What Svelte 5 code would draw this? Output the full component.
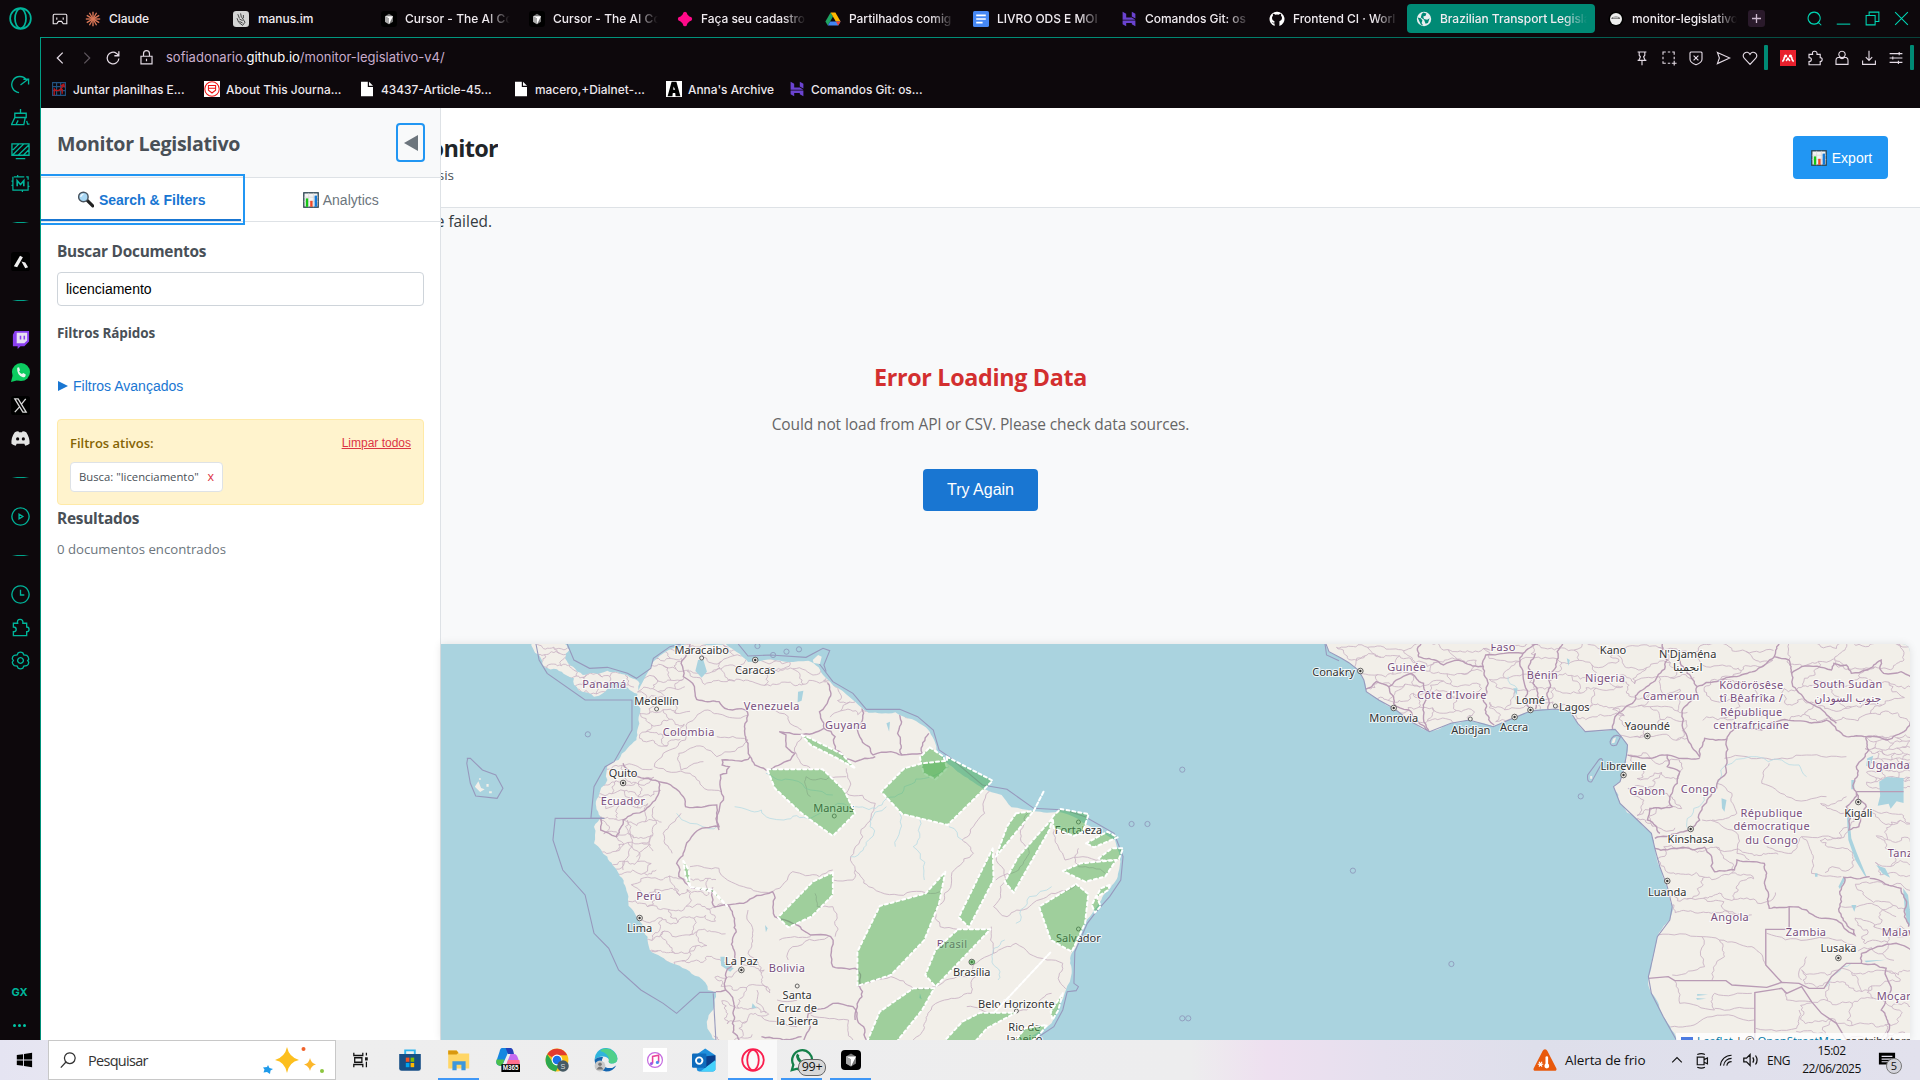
<script>
  const tabs = [
    ['claude', 'Claude'], ['manus', 'manus.im'], ['cursor', 'Cursor - The AI Co'], ['cursor', 'Cursor - The AI Co'],
    ['pink', 'Faça seu cadastro'], ['drive', 'Partilhados comig'], ['docs', 'LIVRO ODS E MOI'],
    ['hostinger', 'Comandos Git: os'], ['github', 'Frontend CI · Worl'],
    ['globe', 'Brazilian Transport Legisla'], ['render', 'monitor-legislativo']
  ];
  const bookmarks = [
    ['sheet', 'Juntar planilhas E...', 153], ['shieldred', 'About This Journa...', 155], ['file', '43437-Article-45...', 154],
    ['file', 'macero,+Dialnet-...', 153], ['anna', "Anna's Archive", 123], ['hostinger', 'Comandos Git: os...', 140]
  ];
  const tools = ['pin', 'snap', 'shield', 'send', 'heart'];
  const tools2 = ['mendeley', 'puzzle', 'user', 'download', 'sliders'];
  const rail = ['speed', 'broom', 'monitor', 'mod', '-', 'aria', '-', 'twitch', 'whatsapp', 'x', 'discord', '-', 'play', '-', 'clock', 'puzzle', 'gear'];
  const apps = ['taskview', 'store', 'explorer', 'm365', 'chrome', 'edge', 'itunes', 'outlook', 'operared', 'waoutline', 'cursorapp'];
  const running = ['explorer', 'operared', 'waoutline', 'cursorapp'];

  // Single-stroke glyphs on a 20x20 grid
  const strokes = {
    back: 'M13 4 7 10l6 6', fwd: 'M7 4l6 6-6 6', reload: 'M16.500 10.500a6.500 6.500 0 1 1-2.500-5.600l2 2M16.500 2.500v5h-5',
    lock: 'M3.500 8.500h13v9h-13zM6.500 8.500V5.500a3.500 3.500 0 0 1 7 0v3M10 11.500v3',
    pin: 'M4.500 2.500h11M4.500 13h11M6.500 2.500v4l1.500 2-2 4.500M13.500 2.500v4l-1.500 2 2 4.500M10 13v6',
    snap: 'M2.500 6V2.500H6M8.500 2.500h3M14 2.500h2.500V6M2.500 8.500v3M2.500 14v2.500H6M8.500 16.500h3M16.500 8.500v3M16.500 13.500v6M13.500 16.500h6',
    shield: 'M2.500 3.500l1-1h13l1 1v8q0 4-7.500 7Q2.500 15.500 2.500 11.500zM7 7l6 6M13 7l-6 6',
    send: 'M3 3l15.500 7L3 17l2.500-7z',
    heart: 'M10 18 3 10.500Q0 7 3 4q4-3 7 1.500Q13 1 17 4q3 3 0 6.500z',
    puzzle: 'M2.500 5.500h4.500q-1-4 2.500-4T12.500 5.500H16.500v4q2.500 0 2.500 2.500t-2.500 2.500V18.500H2.500v-4q3 0 3-2.500t-3-2.500z',
    user: 'M10 1.500a4 4 0 1 0 .01 0M6.500 9q-4 0-4 4v5h15v-5q0-4-4-4Q10 13 6.500 9',
    download: 'M10 1v12M6 9l4 4 4-4M2 13v5h16v-5',
    sliders: 'M2 4.500h16M2 10h16M2 15.500h16M14 2.500v4M6 8v4M13 13.500v4',
    speed: 'M16.500 5.500A8.500 8.500 0 1 0 8.500 18.500M10 10.500 18 4.500M18.500 10V4.500H13',
    broom: 'M10 1v4.500M4 5.500h12v4.500H4zM4 10 .500 17.500h13l1.500-7.500M5.500 17l2-4M16.500 13.500l1 3.500h2',
    monitor: 'M1 3h18v12H1zM5 18.500h10M2 9.500l6.500-6.500M2 14.500 13.500 3M7.500 15 18.500 4.500M13 15l5.500-5.500',
    play: 'M10 1a9 9 0 1 0 .01 0M8.500 7.500v5l4-2.500z', clock: 'M10 1a9 9 0 1 0 .01 0M10 5v5.500h4',
    gear: 'M7.500 2Q10 .500 12.500 2l1 2 3 .5q2.500 2 2 4.500L17.500 10l1 1.500q.5 2.500-2 4l-3 .5-1 2Q10 19.500 7.500 18l-1-2-3-.5q-2.500-2-2-4L2.500 10l-1-1.500Q1 6 3.500 4.500l3-.5zM10 7a3 3 0 1 0 .01 0',
    search: 'M9.500 1.500a8 8 0 1 0 .01 0M15 15l4 4', min: 'M1 17.500h18', restore: 'M1.500 6h12v12.500h-12zM5.500 6V1.500h13V14h-5', close: 'M1.500 1.500l17 17M18.500 1.500l-17 17',
    island: 'M3 4h14q1.500 0 1.500 1.500V16H14l-2-3H8l-2 3H1.500V5.500Q1.500 4 3 4zM6 8v3M14 8v3',
    find: 'M12 2a6 6 0 1 0 .01 0M7.500 12.500 2 18.500', caret: 'M4 13l6-6 6 6',
    cam: 'M5 6h8v9H5zM13 9l4-2v7l-4-2M5 3q5-2 9 0M5 18q5 2 9 0', wifi: 'M3 17A14 14 0 0 1 17 4M7 17A10 10 0 0 1 17 8M11 17a6 6 0 0 1 6-5',
    speaker: 'M2 8h3l4-4v12l-4-4H2zM12 7q2 3 0 6M15 5q3.500 5 0 10'
  };

  // Deterministic noise that roughens border lines
  let seed = 7;
  const rnd = () => (seed = (seed * 16807) % 2147483647) / 2147483647 - 0.5;
  function parse(s) {
    return s.trim().split(' ').map((p) => p.split(',').map(Number));
  }
  function rough(s, amp = 0.22, min = 16) {
    const pts = parse(s);
    const out = [pts[0]];
    const split = (a, b) => {
      const dx = b[0] - a[0], dy = b[1] - a[1];
      if (Math.hypot(dx, dy) < min) { out.push(b); return; }
      const r = rnd() * amp * 2;
      const m = [(a[0] + b[0]) / 2 - dy * r, (a[1] + b[1]) / 2 + dx * r];
      split(a, m); split(m, b);
    };
    for (let i = 1; i < pts.length; i++) split(pts[i - 1], pts[i]);
    return 'M' + out.map((p) => p[0].toFixed(1) + ' ' + p[1].toFixed(1)).join('L');
  }
  // District borders: a jittered brick lattice
  function mesh(x0, y0, x1, y1, w, h) {
    const nodes = [];
    for (let y = y0, j = 0; y <= y1; y += h, j++) {
      const row = [];
      for (let x = x0 + (j % 2 ? w / 2 : 0); x <= x1; x += w) row.push([x + rnd() * w * 0.7, y + rnd() * h * 0.7]);
      nodes.push(row);
    }
    let d = '';
    const line = (a, b) => (d += rough(`${a[0]},${a[1]} ${b[0]},${b[1]}`, 0.3, 9));
    nodes.forEach((row, j) => row.forEach((p, i) => {
      if (row[i + 1]) line(p, row[i + 1]);
      if (nodes[j + 1] && nodes[j + 1][i] && (i + j) % 2 === 0) line(p, nodes[j + 1][i]);
    }));
    return d;
  }

  const americaCoast = '440,180 445,230 442,270 440,300 420,325 400,360 375,375 375,420 355,470 350,500 360,530 345,560 345,610 375,650 400,700 420,760 440,830 465,890 470,930 520,970 580,1010 600,1050 618,1060 622,1210';
  const atlantic = '1300,1210 1330,1185 1370,1150 1385,1100 1402,1050 1415,1000 1415,940 1430,900 1445,850 1465,810 1490,760 1518,710 1523,650 1512,600 1490,583 1440,548 1395,518 1360,518 1330,514 1280,502 1258,465 1215,445 1170,405 1130,362 1112,330 1103,290 1088,262 1058,238 1020,217 960,218 943,202 918,172 882,138 863,112 848,82 825,62 780,66 740,58 690,66 672,42 640,12 560,10 512,30 477,66 462,105 445,150 440,180';
  const america = rough(americaCoast, 0.13, 14) + rough(atlantic, 0.06, 14).replace('M', 'L') + 'Z';
  const panama = rough('205,5 222,45 235,82 262,88 282,105 300,115 310,150 345,170 365,160 380,130 405,125 425,150 448,165 447,130 425,112 400,98 375,92 345,100 320,105 298,80 280,55 290,30 275,5', 0.15, 12) + 'Z';
  const africaCoast = '372,5 380,35 405,55 420,68 440,92 450,120 455,155 480,180 510,205 545,245 582,275 625,250 662,240 710,260 750,235 785,213 835,207 865,215 880,250 895,275 955,268 965,285 980,315 978,345 972,390 965,425 952,440 965,490 1000,540 1028,580 1035,625 1045,680 1060,740 1070,800 1065,840 1040,890 1030,960 1022,1010 1028,1060 1052,1130 1082,1210';
  const africa = rough(africaCoast, 0.07, 12) + 'L1560 1210L1560 5Z';
  const toPath = (s) => 'M' + s.replaceAll(' ', 'L');

  const americaBorders = [
    '560,12 540,70 545,110 570,140 575,178 625,185 645,208 685,210 690,225 682,260 690,310 695,350',
    '695,350 690,358 632,360 632,375 648,380 642,400 628,405 635,480 625,570', '695,350 705,375 730,390 785,360 795,340 775,320 775,285 760,275 805,283 860,265',
    '868,130 870,180 850,215 860,250 860,265 885,290 885,330 910,355 930,365 975,350', '945,205 935,260 945,300 970,345 1010,335 1035,345 1080,340 1095,280', '1030,225 1025,280 1030,330 1035,345',
    '410,370 430,400 490,425 545,470 550,500 620,495 625,560 570,580 550,620 530,670 535,710 565,745 610,745 615,800 645,795',
    '490,425 490,460 460,510 410,540 395,590 360,570 360,530', '645,795 660,850 655,900 660,950 640,1000 640,1050 618,1055',
    '645,795 680,790 745,755 750,830 790,850 830,885 875,890 880,980 930,985 940,1040 935,1100 930,1140', '640,1050 660,1100 655,1150 670,1200',
    '825,1120 880,1090 925,1100 935,1140 955,1200', '825,1120 815,1200', '720,1190 755,1195 810,1190'
  ].map((s) => rough(s, 0.13, 12));
  const americaStates = [
    '975,490 920,650 930,690 960,740 1120,755', '1235,450 1220,520 1170,600 1195,640 1160,680 1130,760 1120,860 1160,868', '880,720 925,720 930,690', '560,680 625,685 680,740 745,755 790,695 850,710 880,690',
    '910,385 910,460 975,490', '910,410 820,410 830,470', '1235,860 1240,940 1290,910 1360,960 1395,970 1390,1030 1405,1050', '1245,640 1240,800 1270,830 1320,800 1370,760 1425,735', '935,1040 1010,1010 1060,1045 1110,1040 1180,1010 1240,940',
    '1320,510 1300,580 1320,640 1280,700 1245,720', '1375,565 1385,620 1400,660', '1400,660 1440,650 1480,660', '1430,625 1430,680 1490,700', '690,225 600,210 560,245 550,300', '535,340 590,320 620,350 690,300 620,290', '535,340 540,390 590,365', '550,300 500,340 480,380 560,400 600,450 630,455',
    '740,210 780,230 810,270', '810,283 800,350 830,385', '1100,1110 1130,1080 1190,1060 1200,1010', '1100,1110 1060,1200', '1180,1100 1240,1120', '1290,1118 1370,1060', '760,900 830,890', '780,960 790,920 870,890', '755,1080 800,1080', '690,810 700,880 690,940 720,1000', '710,1050 730,1120', '840,760 845,800 880,800 885,890', '420,540 430,620 410,690', '480,500 470,600 440,650', '540,520 500,580 520,640', '830,1125 915,1140 925,1200', '720,1130 800,1160'
  ].map((s) => rough(s, 0.16, 12));
  const americaFine = [mesh(440, 20, 560, 330, 28, 32), mesh(560, 20, 860, 170, 40, 38), mesh(350, 380, 500, 720, 34, 40), mesh(420, 720, 650, 1010, 42, 42), mesh(620, 1000, 740, 1200, 46, 46), mesh(200, 20, 440, 180, 24, 28), mesh(870, 130, 1090, 260, 38, 44)];

  const africaBorders = [
    '450,150 475,125 500,140 510,190 540,210 582,275', '500,140 515,120 545,100 570,130 575,160 570,200 580,270', '565,12 560,50 600,65 610,75 640,60 680,80 690,80 700,130 690,180 695,220 712,255', '690,80 695,45 770,40 770,100 775,170 785,210', '795,40 790,130 800,160 795,208', '770,40 800,12', '850,12 838,60 820,110 818,160 820,207',
    '950,268 955,230 990,190 1010,150 1040,110 1060,60 1050,12', '1085,60 1100,100 1120,140 1110,180 1090,220 1100,290 1125,350 1130,320 1135,295 1180,297', '980,345 1060,345 1125,355', '1060,345 1060,380 1085,395 1080,430 1065,470 1070,500 1025,505 1020,540 1045,580',
    '1180,297 1180,360 1160,430 1140,480 1125,540 1105,570 1080,580 1035,595', '1180,297 1200,260 1250,270 1290,240 1340,245 1380,240 1400,270 1420,290 1460,290', '1120,140 1200,110 1240,90 1275,50 1305,60 1310,100 1320,150 1360,200 1400,250',
    '1310,100 1330,80 1390,90 1395,70 1420,75 1430,100 1460,90 1490,60 1495,100 1530,95 1550,110', '1275,50 1285,12', '1460,290 1500,300 1540,270 1550,240', '1460,290 1465,330 1440,380 1435,430 1440,455', '1440,455 1460,500 1445,560 1425,570 1420,500 1440,455',
    '1467,710 1415,712 1410,770 1410,830 1435,870 1437,885 1400,840 1370,835 1340,810 1305,800 1265,805 1260,750 1255,670 1225,665 1200,660 1195,690 1155,695 1150,660 1135,622 1035,625', '1467,715 1530,745 1540,800 1545,860', '1450,940 1520,910 1550,930', '1450,940 1450,970 1500,985 1510,1050 1490,1110 1500,1200'
  ].map((s) => rough(s, 0.13, 10));
  const africaStraight = ['1305,800 1305,868 1258,868 1258,975 1290,1027', '1022,1015 1062,1010 1075,1022 1178,1022 1190,1035 1260,1042 1290,1027 1325,1030 1345,1045 1375,1045 1390,1010 1420,970 1450,970', '1236,1200 1236,1058 1290,1045 1300,1060 1330,1040 1350,1085 1370,1120 1400,1150 1420,1200', '1440,455 1535,455'].map(toPath);
  const africaFine = [mesh(390, 20, 700, 250, 38, 38), mesh(700, 20, 960, 250, 40, 44), mesh(960, 30, 1130, 330, 38, 44), mesh(1462, 290, 1560, 450, 15, 17), mesh(1470, 510, 1560, 740, 34, 40), mesh(1330, 990, 1560, 1200, 44, 50)];
  const africaStates = [mesh(980, 360, 1100, 600, 44, 50), mesh(1040, 640, 1290, 820, 56, 60), mesh(1290, 20, 1560, 260, 54, 54), mesh(1130, 20, 1290, 250, 50, 54), mesh(1380, 480, 1450, 720, 44, 54), mesh(1440, 750, 1560, 960, 44, 50),
    ...['1175,355 1220,350 1260,355 1340,345 1420,350', '1160,430 1190,460 1200,520 1150,540', '1265,370 1250,430 1300,470 1380,470', '1330,590 1415,592 1425,570', '1330,590 1350,640 1350,700 1410,710', '1260,620 1310,640 1330,590', '1130,540 1190,570 1200,640 1225,660', '1040,885 1130,890 1135,980 1070,1005', '1130,890 1165,900 1175,950 1150,1020', '1165,900 1230,920 1258,975', '1075,1022 1085,1090 1155,1110 1155,1060 1230,1060', '1060,1165 1120,1150 1150,1130 1235,1140', '1155,1105 1235,1105', '1238,1165 1320,1165 1325,1110', '1295,1055 1300,1080 1350,1085', '1260,880 1340,900 1410,900 1440,920', '1340,950 1330,1020', '1410,800 1470,790 1520,830'].map((s) => rough(s, 0.15, 12))];

  const zones = [
    '810,285 825,292 900,342 930,385 890,355 830,315', '733,388 857,388 905,450 930,520 880,588 810,520 750,445', '1097,322 1128,350 1136,385 1110,418 1083,400 1075,352', '1135,350 1238,422 1137,555 1035,522 988,455 1040,385 1080,370 1136,362',
    '1290,520 1330,513 1353,452 1330,513 1245,650 1270,560', '1372,535 1365,570 1285,758 1265,725 1295,650', '1390,507 1453,522 1440,575 1420,588 1375,565 1372,530', '1447,610 1495,575 1518,592 1465,622', '1475,655 1505,625 1530,625 1520,660 1485,662', '1395,693 1435,670 1515,660 1490,710 1445,725',
    '1500,735 1497,750 1470,772 1480,745', '1470,768 1480,798 1467,818 1460,795', '1425,732 1452,762 1445,850 1415,935 1368,900 1342,800', '1238,625 1240,720 1185,862 1162,832 1210,700', '1132,695 1118,790 1085,900 1010,1005 935,1038 935,935 985,798 1088,760', '1160,868 1233,868 1110,1040 1087,1005 1110,930', '880,697 880,765 832,830 780,862 757,832 835,725',
    '545,662 557,690 560,742 550,710', '562,742 610,748 643,798 610,755', '1060,1045 1107,1045 1080,1110 1020,1210 955,1210 985,1115', '1125,1210 1170,1145 1210,1118 1290,1118 1225,1165 1195,1210', '1395,1060 1385,1110 1372,1140 1368,1115', '1285,1210 1310,1165 1360,1155 1345,1180 1320,1210', '1367,938 1240,1120'
  ];
  const seaLines = [
    '215,12 222,60 240,100 325,180 430,180 430,270 390,365 370,380 345,440 338,535', '368,535 258,535 253,600 275,690 325,765 345,880 378,925 400,990 450,1050 500,1090 530,1120 582,1057 618,1057', '285,12 300,60 335,85 375,82 420,100 440,115 472,85 478,55 515,20 540,12', '60,355 68,355 95,390 125,405 141,445 128,475 80,468 68,430 60,370 62,355',
    '668,12 690,48 740,45 820,52 858,25 873,32 860,75 865,95', '850,72 880,125 925,160 955,208 1030,208 1070,230 1105,270 1118,330 1140,350 1215,435 1270,448 1330,505 1400,510 1445,530 1510,580 1530,650 1525,720 1500,770 1470,815 1450,850 1422,935 1420,1030 1430,1040 1425,1052 1405,1055 1395,1110 1375,1160 1330,1200', '612,1060 618,1200', '338,535 368,535'
  ].map(toPath);
  const americaIslets = [[330, 283], [745, 45], [775, 35], [803, 28], [710, 18], [1548, 552]];
  const africaIslets = [[84, 389], [14, 552], [427, 692], [625, 972], [84, 1135], [96, 1135], [885, 469]];

  // [x, y, text, kind, marker dx, marker dy, left-aligned x]; kind: c = country, t = town, k = capital
  const americaLabels = [
    [585, 31, 'Maracaibo', 't', 0, 23], [705, 91, 'Caracas', 'k', 0, -31], [367, 133, 'Panamá', 'c'], [484, 183, 'Medellín', 't', 0, 24], [742, 198, 'Venezuela', 'c'], [908, 255, 'Guyana', 'c'], [556, 277, 'Colombia', 'c'],
    [409, 399, 'Quito', 'k', 0, 30], [409, 482, 'Ecuador', 'c'], [881, 504, 'Manaus', 't', 1, 24], [1429, 571, 'Fortaleza', 't', 0, -25], [467, 769, 'Perú', 'c'], [446, 865, 'Lima', 'k', 0, -31], [1146, 913, 'Brasil', 'c'], [1429, 893, 'Salvador', 't', 0, -26],
    [674, 962, 'La Paz', 'k', 0, 28], [776, 984, 'Bolivia', 'c'], [1190, 996, 'Brasília', 'k', 0, -30], [799, 1064, 'Santa', 't', 0, -26], [799, 1103, 'Cruz de', 't'], [799, 1142, 'la Sierra', 't'], [1290, 1091, 'Belo Horizonte', 't', 0, 22], [1308, 1161, 'Rio de', 't'], [1308, 1197, 'Janeiro', 't']
  ];
  const africaLabels = [
    [388, 95, 'Conakry', 'k', 54, -2], [535, 81, 'Guinée', 'c'], [729, 20, 'Faso', 'c'], [808, 106, 'Bénin', 'c'], [950, 31, 'Kano', 't'], [1100, 42, "N'Djaména", 't'], [1100, 82, 'انجمينا', 't'], [934, 114, 'Nigeria', 'c'], [626, 166, "Côte d'Ivoire", 'c'], [784, 181, 'Lomé', 'k', 0, 29],
    [872, 201, 'Lagos', 't', -38, -3], [1067, 169, 'Cameroun', 'c'], [1228, 135, 'Ködörösêse', 'c'], [1228, 175, 'tî Bêafrîka /', 'c'], [1228, 215, 'République', 'c'], [1228, 255, 'centrafricaine', 'c'], [1422, 132, 'South Sudan', 'c'], [1422, 175, 'جنوب السودان', 'c'],
    [509, 234, 'Monrovia', 'k', 0, -30], [664, 270, 'Abidjan', 't', -1, -33], [751, 260, 'Accra', 'k', 1, -29], [1019, 259, 'Yaoundé', 'k', 0, 29], [971, 377, 'Libreville', 'k', 0, 28], [1019, 452, 'Gabon', 'c'], [1122, 446, 'Congo', 'c'], [1504, 375, 'Uganda', 'c'],
    [1269, 519, 'République', 'c'], [1269, 559, 'démocratique', 'c'], [1269, 599, 'du Congo', 'c'], [1443, 519, 'Kigali', 'k', 0, -33], [1106, 597, 'Kinshasa', 'k', 0, -30], [1548, 638, 'Tanz', 'c', 0, 0, 1502], [1059, 755, 'Luanda', 'k', 0, -32], [1185, 832, 'Angola', 'c'], [1338, 875, 'Zambia', 'c'], [1530, 876, 'Malaw', 'c', 0, 0, 1490], [1403, 924, 'Lusaka', 'k', 0, 30], [1530, 1069, 'Moçar', 'c', 0, 0, 1480]
  ];
  const tiles = [
    { x: 440.5, sx: 2.24, labels: americaLabels, islets: americaIslets },
    { x: 1140.5, sx: 2.0103, labels: africaLabels, islets: africaIslets }
  ];
</script>

{#snippet icon(name, size = 18)}
  <svg class="icon i-{name}" width={size} height={size} viewBox="0 0 20 20" fill="none">
    {#if strokes[name]}<path d={strokes[name]} stroke="currentColor" stroke-width="1.4" />
    {:else if name === 'claude'}<g stroke="#d97757" stroke-width="1.7">{#each [0, 30, 60, 90, 120, 150] as a}<path d="M10 1v18" transform="rotate({a} 10 10)" />{/each}</g>
    {:else if name === 'manus'}<rect width="20" height="20" rx="4" fill="#d5d5d5" /><path d="M6 4l2 5M9.500 3l1 5M13 5v4M5 9l2 5 5 4 3-4-4-6M8 10l4 2M8 13l4 2" stroke="#333" stroke-width="1.100" />
    {:else if name === 'cursor' || name === 'cursorapp'}<rect width="20" height="20" rx="4" fill="#000" /><path d="M10 3.500l5 3v7l-5 3-5-3v-7z" fill="#777" /><path d="M5 6.500h10l-5 10v-7z" fill="#fff" /><path d="M5 6.500l5 3v7l-5-3z" fill="#aaa" />
    {:else if name === 'pink'}<path d="M10 1q2.500 0 3 3.500l2.500 2.500Q19 7.500 19 10t-3.500 3L13 15.500Q12.500 19 10 19t-3-3.500L4.500 13Q1 12.500 1 10t3.500-3L7 4.500Q7.500 1 10 1z" fill="#ff0a8a" />
    {:else if name === 'drive'}<path d="M7 2 0.500 13l3 5L10 7z" fill="#1ea362" /><path d="M7 2h6l6.500 11h-6z" fill="#ffba00" /><path d="M3.500 18h13l3-5h-13z" fill="#4285f4" /><path d="M13.500 13h6l-3 5z" fill="#ea4335" />
    {:else if name === 'docs'}<rect width="20" height="20" rx="2" fill="#4688f4" /><path d="M4 5.500h12M4 10h12M4 14.500h8" stroke="#fff" stroke-width="2" />
    {:else if name === 'hostinger'}<path d="M2 1l4.500 2.500v4.500h7L18 11H2zM13.500 1 18 3.500v6l-4.500-2.500zM2 12h16v7l-4.500-2.500V15h-7v4L2 16.500z" fill="#6a43d0" />
    {:else if name === 'github'}<path d="M10 1a9 9 0 0 0-3 17.600v-3q-3 .4-3.500-2.100 2 2 3.500.5 0-1-.3-1.300-3-.7-3-4Q3.700 7 5 6q-.5-1.500.2-2.500Q6.500 3.500 8 4.700q2-.5 4 0 1.500-1.200 2.800-1.200.7 1 .2 2.500 1.300 1 1.300 2.700 0 3.300-3.300 4v5.900A9 9 0 0 0 10 1z" fill="#fff" />
    {:else if name === 'globe'}<circle cx="10" cy="10" r="9" fill="#e9eef0" /><path d="M2 8l4 1 2 3-1 3 2 3-3-1zM9 2l4 1-1 3-3 1 1 3 4 1 3-2-2 6-3 1-2-5-4-3 1-4z" fill="#008a75" />
    {:else if name === 'render'}<circle cx="10" cy="10" r="9.500" fill="#000" /><circle cx="10" cy="10" r="7.500" fill="#eee" /><path d="M3 10h12q0-3-5-3-5 0-6 3z" fill="#666" /><path d="M6 8.500h7" stroke="#ccc" stroke-width="1.500" />
    {:else if name === 'sheet'}<path d="M2 2h16v16H2zM2 7h16M2 12h16M7 2v16M12 2v16" stroke="#235382" stroke-width="1.400" /><path d="M4 18V9q0 3 5 3 5-2 6-7M12 6l4-2 1 4M11 11h3v5" stroke="#b5181c" stroke-width="1.700" />
    {:else if name === 'shieldred'}<rect width="20" height="20" fill="#fff" /><circle cx="10" cy="10" r="9" stroke="#e11" stroke-width="1.300" /><path d="M5.500 5.500h9v6L10 15l-4.500-3.500zM6 9h8" stroke="#e11" stroke-width="1.300" />
    {:else if name === 'file'}<path d="M2.500 1h8.500v6.500h6.500V19h-15zM12.500 1l5 5h-5z" fill="#fff" />
    {:else if name === 'anna'}<rect width="20" height="20" fill="#fff" /><path d="M7 1h6l5 18h-6l-.5-4h-3L8 19H2zM9.500 7 9 11h2.500z" fill="#000" fill-rule="evenodd" />
    {:else if name === 'mendeley'}<rect width="20" height="20" fill="#e9202d" /><path d="M3 14.500q2.500-2 2.500-6M14.500 8.500q0 4 2.500 6M7.500 13.500q2-1.500 2.500-4 .5 2.500 2.500 4" stroke="#fff" stroke-width="2" /><circle cx="7" cy="7.500" r="2" fill="#fff" /><circle cx="13" cy="7.500" r="2" fill="#fff" />
    {:else if name === 'mod'}<path d="M3 3h11M16 3h2v3M18 8v9H2V3M.5 7.500h2M.5 12h2M17.500 13h2M7 1v2M12 17v2" stroke="currentColor" stroke-width="1.300" /><path d="M6.500 13V7L10 11l3.500-4v6" stroke="currentColor" stroke-width="1.700" />
    {:else if name === 'aria'}<rect width="20" height="20" rx="3" fill="#000" /><path d="M3 15 9.500 4l3 1.500L6.500 16zM11 10l4 1 3 5-3 1z" fill="#eee" />
    {:else if name === 'twitch'}<path d="M4 1h15v11l-5 5h-4l-3 3v-3H2V5z" fill="#8a3ff0" /><path d="M6 3h11v8l-3 3H6z" fill="#e6dff2" /><path d="M10 6v4M14 6v4" stroke="#8a3ff0" stroke-width="1.600" />
    {:else if name === 'whatsapp'}<circle cx="10.500" cy="9.500" r="9.500" fill="#0ccb60" /><path d="M0 20l2-8 6 6z" fill="#0ccb60" /><path d="M6.500 5l2-.5 1 3-1 1.500q1 2 3 2.500l1.500-1 2.500 1.500q0 3-3 3Q6 13 6.500 5z" fill="#e9f5ee" />
    {:else if name === 'x'}<rect width="20" height="20" rx="3" fill="#000" /><path d="M4 3h3.500L16 17h-3.500zM15.500 3 11 8.500M9 11.500 4 17" stroke="#d8d8d8" stroke-width="1.400" />
    {:else if name === 'discord'}<path d="M4 3.500q2-1.200 4-1l.5 1h3l.5-1q2-.2 4 1 4 6 3.500 12-2 1.500-4.500 2l-1-2h-8l-1 2q-2.500-.5-4.500-2Q0 9 4 3.500z" fill="#e4e4e4" /><circle cx="7" cy="10.500" r="1.700" fill="#0d080c" /><circle cx="13" cy="10.500" r="1.700" fill="#0d080c" />
    {:else if name === 'opera' || name === 'operared'}<circle cx="10" cy="10" r="9" stroke="currentColor" stroke-width="1.500" /><ellipse cx="10" cy="10" rx="4.800" ry="8.500" stroke="currentColor" stroke-width="1.500" />
    {:else if name === 'win'}<path d="M2 4.500l7-1v6H2zM10 3.300 19 2v7.500h-9zM2 10.500h7v6l-7-1zM10 10.500h9V18l-9-1.300z" fill="#000" />
    {:else if name === 'taskview'}<path d="M2 2v3h10V2M2 18v-3h10v3M3 7.500h8v5H3zM16 2v3M16 12v6" stroke="#111" stroke-width="1.400" /><path d="M14.500 7h3v3.500h-3z" fill="#111" />
    {:else if name === 'store'}<path d="M6 5V2h8v3" stroke="#30b6f0" stroke-width="1.600" /><path d="M1 5h18v12q0 2-2 2H3q-2 0-2-2z" fill="#174f86" /><path d="M6.500 8h3v3.500h-3z" fill="#f25022" /><path d="M10.500 8h3v3.500h-3z" fill="#7fba00" /><path d="M6.500 12.500h3V16h-3z" fill="#00a4ef" /><path d="M10.500 12.500h3V16h-3z" fill="#ffb900" />
    {:else if name === 'explorer'}<path d="M1 2h7l2 2.500h8.500V17H1z" fill="#ffd666" /><path d="M1 2h7l1.500 2L8 5.500H1z" fill="#d9980d" /><path d="M4.500 18.500V11h11v7.500h-3.500V14H8v4.500z" fill="#3c97dc" />
    {:else if name === 'm365'}<path d="M5 0h8l-3 4-5 11Q-1 15 .5 10.500L3 3q.5-3 2-3z" fill="#1587e0" /><path d="M.5 9.500h6.500L5 15Q-1 15 .5 9.500z" fill="#4cc04a" /><path d="M8 0h4q2 0 2.500 3l.5 2h-5z" fill="#2540b8" /><path d="M12 5h3q2.500 0 3.500 4l1 3q.5 3-2 3H8z" fill="#c46af0" /><path d="M10 10h9.500q1 5-2.500 5H8.500z" fill="#ff6f8e" /><rect x="4.500" y="13.500" width="15.500" height="6.500" fill="#000" /><text x="12.200" y="18.700" fill="#fff" font-size="5.300" font-weight="bold" text-anchor="middle">M365</text>
    {:else if name === 'chrome'}<circle cx="10" cy="10" r="9.500" fill="#fbc116" /><path d="M10 10 1.800 5.200A9.500 9.500 0 0 1 18.500 6H10z" fill="#e33b2e" /><path d="M1.800 5.200A9.500 9.500 0 0 0 9 19.500l4-7-6 0z" fill="#2da94f" /><circle cx="10" cy="10" r="4.500" fill="#fff" /><circle cx="10" cy="10" r="3.600" fill="#1a73e8" /><circle cx="15" cy="15" r="4.800" fill="#455a64" /><text x="15" y="17.200" fill="#ddd" font-size="6" text-anchor="middle">S</text>
    {:else if name === 'edge'}<path d="M.5 10A9.500 9.500 0 0 1 19.500 9q0 4-5 4-3 0-2-3-1-3-5-3-5 0-7 3z" fill="#2fb4dc" /><path d="M10 .5A9.500 9.500 0 0 1 19.500 9q0 4-5 4-3 0-2-3Q12 4 5 2.500 7 .5 10 .5z" fill="#4fd08a" /><path d="M.5 10q2-3 7-2.500-3 6 2 8.500 5 2 9-1.500Q16 19.500 10 19.500.5 18 .5 10z" fill="#1466b0" /><circle cx="5" cy="15" r="4.500" fill="#c9c9c9" /><circle cx="5" cy="13.500" r="1.500" fill="#777" /><path d="M2 18q3-5 6 0z" fill="#777" />
    {:else if name === 'itunes'}<rect width="20" height="20" fill="#fff" /><circle cx="10" cy="10" r="6.200" stroke="#c56be0" stroke-width="1" /><path d="M8 13V7l5-1v6" stroke="#e8439b" stroke-width="1.300" /><circle cx="7" cy="13" r="1.300" fill="#9a5be8" /><circle cx="12" cy="12" r="1.300" fill="#4a8df0" />
    {:else if name === 'outlook'}<path d="M3 6l8-5.500 8.500 5.500v12q0 1.500-2 1.500H6q-2 0-2-2z" fill="#1f8fdc" /><path d="M10 7l9.500-1v5l-9.500 6z" fill="#0b3f8c" /><path d="M7 19.500 19.500 10v8q0 1.500-2 1.500z" fill="#45d2fb" /><rect y="4.500" width="12" height="12" rx="1" fill="#0f6cbd" /><circle cx="6" cy="10.500" r="2.700" stroke="#fff" stroke-width="1.600" />
    {:else if name === 'waoutline'}<path d="M1.500 18.500l1.300-4.500A8.300 8.300 0 1 1 6 17.300z" stroke="#14804a" stroke-width="1.900" /><path d="M7 5.500q-2 2 1.500 5.500t6 2" stroke="#14804a" stroke-width="2.400" />
    {:else if name === 'chart'}<rect x="1" y="1" width="18" height="18" fill="#f3f3f3" stroke="#263f4d" stroke-width="1.600" /><path d="M1 6.500h18M1 12h18M7 1v18M13 1v18" stroke="#d3d3d3" stroke-width=".7" /><path d="M5 8v10.500" stroke="#15c515" stroke-width="3" /><path d="M10.500 11v7.500" stroke="#f04a28" stroke-width="3" /><path d="M16 4.500v14" stroke="#1479d7" stroke-width="3" />
    {:else if name === 'lens'}<path d="M12 11l6.500 6.500" stroke="#222" stroke-width="3.600" stroke-linecap="round" /><circle cx="7.500" cy="7" r="5.600" fill="#a9d8f5" stroke="#4a5560" stroke-width="1.700" /><path d="M4.500 7q0-3 3-3" stroke="#fff" stroke-width="1.200" />
    {:else if name === 'alert'}<path d="M10 1q1.300 0 2 1.500l7.500 14.500q.5 2-1.500 2H2q-2 0-1.500-2L8 2.500Q8.700 1 10 1z" fill="#e8590c" /><path d="M11.500 8v7" stroke="#fff" stroke-width="2.200" stroke-linecap="round" /><circle cx="11.500" cy="15" r="2" fill="#fff" /><path d="M4 13.500h4.500M5 11.500l2.500 4M7.500 11.500l-2.500 4" stroke="#fff" stroke-width=".9" />
    {:else if name === 'note'}<path d="M1 2h18v13h-5v4l-5-4H1z" fill="#000" /><path d="M4 6h12M4 9h12M4 12h9" stroke="#e3e1ee" stroke-width="1.200" />
    {/if}
  </svg>
{/snippet}

<div class="screen">
  <div class="tabbar">
    <span class="logo">{@render icon('opera', 23)}</span>
    <span class="island">{@render icon('island', 16)}</span>
    {#each tabs as [ic, label], i}
      <div class="tab" class:short={i < 2} class:active={i === 9} class:last={i === 10}>{@render icon(ic, 16)}<span>{label}</span></div>
    {/each}
    <span class="plus"><svg width="17" height="17" viewBox="0 0 17 17"><path d="M8.500 4v9M4 8.500h9" stroke="#cdb9cf" stroke-width="1.300" /></svg></span>
    <div class="winctl">{#each ['search', 'min', 'restore', 'close'] as n}{@render icon(n, 15)}{/each}</div>
  </div>

  <div class="middle">
    <nav class="rail">
      {#each rail as r}
        {#if r === '-'}<div class="sep"><i></i></div>{:else}<div class="ritem">{@render icon(r, 19)}</div>{/if}
      {/each}
      <div class="gx">GX</div>
      <div class="dots"><i></i><i></i><i></i></div>
    </nav>

    <div class="window">
      <div class="address">
        <span class="nav">{@render icon('back', 18)}<span class="dim">{@render icon('fwd', 18)}</span>{@render icon('reload', 18)}</span>
        {@render icon('lock', 17)}
        <span class="url">sofiadonario.<b>github.io</b>/monitor-legislativo-v4/</span>
        <div class="tools">{#each tools as t}{@render icon(t, 16)}{/each}</div>
        <i class="bar"></i>
        <div class="tools two">{#each tools2 as t}{@render icon(t, 16)}{/each}</div>
        <i class="bar"></i>
      </div>
      <div class="bookmarks">
        {#each bookmarks as [ic, label, w]}<div class="bm" style:width="{w}px">{@render icon(ic, 16)}<span>{label}</span></div>{/each}
      </div>

      <div class="page">
        <aside>
          <div class="side-head"><h2>Monitor Legislativo</h2><button class="collapse" aria-label="Collapse"><i></i></button></div>
          <div class="side-tabs">
            <div class="stab on">{@render icon('lens', 17)}<span>Search &amp; Filters</span></div>
            <div class="stab">{@render icon('chart', 16)}<span>Analytics</span></div>
          </div>
          <div class="side-body">
            <h3>Buscar Documentos</h3>
            <div class="input">licenciamento</div>
            <h4>Filtros Rápidos</h4>
            <div class="adv"><i></i>Filtros Avançados</div>
            <div class="activebox">
              <div class="row"><strong>Filtros ativos:</strong><u>Limpar todos</u></div>
              <div class="chip">Busca: "licenciamento"<em>x</em></div>
            </div>
            <h3 class="res">Resultados</h3>
            <p>0 documentos encontrados</p>
          </div>
        </aside>

        <main>
          <header>
            <div class="titles"><div class="h1"><span>onitor</span></div><div class="sub"><span>sis</span></div></div>
            <button class="export">{@render icon('chart', 16)}Export</button>
          </header>
          <div class="failed"><span>e failed.</span></div>
          <section class="error">
            <h2>Error Loading Data</h2>
            <p>Could not load from API or CSV. Please check data sources.</p>
            <button>Try Again</button>
          </section>
          <div class="map">
            <svg width="1469" height="396" viewBox="441 644 1469 396">
              <clipPath id="am"><path d={america + panama} /></clipPath>
              <clipPath id="af"><path d={africa} /></clipPath>
              <g transform="translate(440 640) scale({1 / 2.24} {1 / 3})">
                <path class="land" d={america} /><path class="land" d={panama} />
                <g clip-path="url(#am)">
                  {#each americaFine as d}<path class="fine" {d} />{/each}
                  {#each americaStates as d}<path class="state" {d} />{/each}
                  <path class="river" d={rough('660,500 720,510 770,540 830,535 880,500 930,500 990,495 1040,440 1100,410 1140,380') + rough('1000,500 960,600 920,650') + rough('1030,520 1020,620') + rough('1075,540 1060,620 1085,720') + rough('730,400 790,420 830,450 880,465') + rough('1290,850 1320,770 1370,740') + rough('1265,900 1250,1020') + rough('1140,560 1170,600') + rough('530,520 560,550 620,560')} />
                  <path class="water" d="M578 60l12 0 8 35-12 18-14-20zM802 155l12-3-4 30-9 5zM628 950l10 0-2 20 22 15-8 10-20-18zM680 1065l12-5M700 1090l10 15-12 0zM728 855l6 10-4 12zM1075 1060l4 18-5-4zM1000 250l8-5-2 30z" />
                  {#each americaBorders as d}<path class="country" {d} />{/each}
                </g>
                {#each seaLines as d}<path class="sea" {d} />{/each}
                <path class="land" d="M78 440l8-16 6 20 8 4-10 8zM104 432l5 0 0 8-5 0zM110 454l6 0 0 6-6 0zM88 414l3 0 0 6-3 0zM835 60l12-15 8 5-4 22-14-3z" />
              </g>
              <g transform="translate(1140 640) scale({1 / 2.0103} {1 / 3})">
                <path class="land" d={africa} />
                <g clip-path="url(#af)">
                  {#each africaFine as d}<path class="fine" {d} />{/each}
                  {#each africaStates as d}<path class="state" {d} />{/each}
                  <path class="river" d={rough('1105,570 1130,490 1165,420 1190,370 1240,350 1290,360 1340,410') + rough('740,110 760,190') + rough('1380,1040 1400,1000 1430,970')} />
                  <path class="water" d="M1486 425l15-14 34 3v75l-14-5-12 22-4-15-22 6 5-30zM1420 505l4 0 6 90 10 40 22 80-6-10-18-45-14-60zM1404 740l10-30 5 5-12 32zM1534 745l10 20 8 100-10-15-5-50zM1480 675l18 10 10 28-15-12zM1169 475l10 5-4 35-5-10zM1120 1062l22 2-22 3zM1118 1074l20 2-18 3zM1456 962l44-3-40 8zM1357 700l5 0 0 10-5 0zM1430 795l10 0-4 20zM1462 355l12-8-6 35-8-5zM1430 420l6 0 0 28-6 0zM858 55l6 5-3 18zM750 145l8 0 0 20z" />
                  {#each africaBorders as d}<path class="country" {d} />{/each}
                  {#each africaStraight as d}<path class="country" {d} />{/each}
                </g>
                <path class="coast" d={toPath(africaCoast)} />
                <path class="sea" d="M922 360Q930 350 930 365L908 425Q898 430 900 405ZM948 295Q955 280 966 290L958 315Q945 322 945 305ZM372 12L375 45 400 62" />
                <path class="land" d="M951 296l6-4-3 16-6 2zM905 408l4 0 0 8-4 0z" />
              </g>
              {#each tiles as t}
                {#each t.islets as [x, y]}<ellipse class="islet" cx={t.x + x / t.sx} cy={640 + y / 3} rx="2.600" ry="2.600" />{/each}
                {#each t.labels as [x, y, text, kind, dx, dy, start]}
                  {#if dx || (dy && kind !== 'c')}
                    <circle class="ring" cx={t.x + (x + dx) / t.sx} cy={640 + (y + dy) / 3} r={kind === 'k' ? 2.8 : 2} />
                    {#if kind === 'k'}<circle cx={t.x + (x + dx) / t.sx} cy={640 + (y + dy) / 3} r="1.2" fill="#333" />{/if}
                  {/if}
                  <text class:cn={kind === 'c'} x={t.x + (start ?? x) / t.sx} y={644 + y / 3} text-anchor={start ? 'start' : 'middle'}>{text}</text>
                {/each}
              {/each}
              <g transform="translate(440 640) scale({1 / 2.24} {1 / 3})">
                {#each zones as z}<polygon class="zone" points={z} />{/each}
                <circle cx="1192" cy="966" r="7" fill="#4caf50" fill-opacity="0.6" />
              </g>
            </svg>
            <div class="attr"><i></i><a href="#map">Leaflet</a> | © <a href="#map">OpenStreetMap</a> contributors</div>
          </div>
        </main>
      </div>
    </div>
  </div>

  <footer class="taskbar">
    <div class="start">{@render icon('win', 18)}</div>
    <div class="tsearch">{@render icon('find', 18)}<span>Pesquisar</span>
      <svg width="64" height="28" viewBox="0 0 64 28"><path d="M25 1q2 10 12 13-10 2-12 13-2-11-12-13Q23 11 25 1z" fill="#fcbf1e" /><path d="M48 12q1 5 6 6.500-5 1-6 6.500-1-5-6-6.500 5-1 6-6.500z" fill="#fcb72b" /><path d="M6 19l1.500 3 3.500 1-2.500 1.500-.5 3.500-3-2-3.500.5 1-3L1 21.500l4-.5z" fill="#1f9bea" /><circle cx="41.500" cy="3" r="2" fill="#f0622b" /><circle cx="60" cy="25" r="2" fill="#8cc63f" /></svg>
    </div>
    {#each apps as a}
      <div class="app" class:running={running.includes(a)} class:current={a === 'operared'}>{@render icon(a, a === 'taskview' ? 18 : a === 'cursorapp' ? 20 : 24)}{#if a === 'waoutline'}<span class="badge">99+</span>{/if}</div>
    {/each}
    <div class="tray">
      {@render icon('alert', 24)}<span class="cold">Alerta de frio</span>
      <div class="sys">{@render icon('caret', 16)}{@render icon('cam', 17)}{@render icon('wifi', 16)}{@render icon('speaker', 18)}</div>
      <span class="lang">ENG</span>
      <div class="time"><span>15:02</span><span>22/06/2025</span></div>
      <div class="notes">{@render icon('note', 18)}<span>5</span></div>
    </div>
  </footer>
</div>

<style>
  :global(body) { margin: 0; overflow: hidden; }
  .screen { width: 1920px; height: 1080px; display: flex; flex-direction: column; background: #0d080c; font-family: 'Open Sans', 'Noto Sans', sans-serif; overflow: hidden; }
  .screen * { box-sizing: border-box; }
  svg { display: block; flex: none; }
  h2, h3, h4, p { margin: 0; }
  .icon text { font-family: 'Liberation Sans', sans-serif; }

  .tabbar { height: 37px; flex: none; display: flex; align-items: center; color: #f0ebf0; font: 500 12px Inter, sans-serif; }
  .logo { width: 40px; display: flex; justify-content: center; color: #00b59b; }
  .island { width: 41px; padding-left: 12px; }
  .tab { width: 148px; height: 29px; padding-left: 4px; display: flex; align-items: center; gap: 8px; flex: none; }
  .tab span { width: 105px; overflow: hidden; white-space: nowrap; letter-spacing: -0.05px; mask-image: linear-gradient(90deg, #000 78%, transparent 100%); }
  .tab.short span { mask-image: none; }
  .tab:nth-child(4) { gap: 9px; }
  .tab:nth-child(5) span, .tab:nth-child(6) span { letter-spacing: 0.02px; }
  .tab.active { width: 188px; margin-left: -6px; padding-left: 9px; background: #008a75; border-radius: 4px; }
  .tab.active span { width: 147px; mask-image: linear-gradient(90deg, #000 84%, transparent 100%); }
  .tab.last { width: 144px; margin-left: 9px; }
  .plus { width: 17px; height: 17px; border-radius: 3px; background: #2a1a2b; }
  .winctl { margin-left: auto; padding-right: 11px; display: flex; gap: 14px; color: #00d6b4; }

  .middle { height: 1003px; display: flex; flex: none; }
  .rail { width: 40px; padding: 31px 0 0 1px; display: flex; flex-direction: column; color: #00b59b; flex: none; }
  .ritem { height: 33px; display: flex; align-items: center; justify-content: center; }
  .sep { height: 45px; display: flex; align-items: center; justify-content: center; }
  .sep i { width: 17px; height: 1px; background: linear-gradient(90deg, transparent, #00a58c 30%, #00a58c 70%, transparent); }
  .gx { margin-top: auto; height: 37px; text-align: center; font: 700 11px/37px Inter, sans-serif; padding-right: 2px; }
  .dots { height: 29px; display: flex; gap: 2px; align-items: center; justify-content: center; padding-right: 2px; }
  .dots i { width: 3px; height: 3px; border-radius: 50%; background: #00c5a5; }

  .window { flex: 1; border-left: 1px solid; border-top: 1px solid; border-image: linear-gradient(130deg, #009c84 0%, #008a75 40%, #0d080c 92%) 1; display: flex; flex-direction: column; min-width: 0; }
  .address { height: 39px; display: flex; align-items: center; color: #e4dbe5; flex: none; padding-left: 10px; }
  .nav { display: flex; gap: 8.500px; margin-right: 16px; }
  .dim { color: #5d555d; }
  .url { margin-left: 11px; padding-bottom: 2px; font: 400 13px Inter, sans-serif; color: #c9adcc; }
  .url b { font-weight: 400; color: #fff; }
  .tools { margin-left: auto; display: flex; gap: 11px; margin-right: 6px; }
  .tools.two { margin-left: 12px; }
  .bar { width: 4px; height: 25px; background: #008a75; border-radius: 1px; }
  .address .bar:last-child { margin-right: 6px; }
  .bookmarks { height: 31px; padding: 0 0 7px 10px; display: flex; align-items: center; flex: none; color: #ece7ec; font: 500 11.900px Inter, sans-serif; }
  .bm { display: flex; gap: 6px; align-items: center; white-space: nowrap; }

  .page { flex: 1; display: flex; min-height: 0; background: #f8f9fa; }
  aside { width: 400px; background: #fff; border-right: 1px solid #dee2e6; flex: none; color: #495057; }
  .side-head { height: 70px; background: #f8f9fa; border-bottom: 1px solid #dee2e6; display: flex; align-items: center; justify-content: space-between; padding: 0 15px 0 16px; }
  .side-head h2 { font-size: 19.600px; line-height: 28px; padding-top: 3px; letter-spacing: -0.32px; }
  .collapse { width: 29px; height: 39px; background: transparent; border: 2px solid #2196f3; border-radius: 4px; padding: 0; display: flex; align-items: center; justify-content: center; }
  .collapse i { border: 8px solid transparent; border-right: 14px solid #6c757d; border-left: 0; }
  .side-tabs { height: 44px; border-bottom: 1px solid #dee2e6; display: flex; font: 14px 'Liberation Sans', Arial, sans-serif; }
  .stab { flex: 1; display: flex; align-items: center; justify-content: center; gap: 4px; color: #6c757d; padding-left: 1px; }
  .stab.on { color: #1976d2; font-weight: 700; border-bottom: 2px solid #1976d2; outline: 2px solid #2196f3; outline-offset: 2px; z-index: 1; clip-path: inset(-4px -5px -6px 0); gap: 5px; padding: 2px 0 0 1px; }
  .side-body { padding: 20px 16px; }
  h3 { font-size: 15.400px; line-height: 20px; letter-spacing: -0.25px; }
  .input { margin-top: 10px; height: 34px; border: 1px solid #ced4da; border-radius: 4px; color: #000; font: 14px/32px 'Liberation Sans', Arial, sans-serif; padding-left: 8px; }
  h4 { font-size: 13.500px; line-height: 18px; margin-top: 18px; letter-spacing: -0.1px; }
  .adv { margin-top: 34px; height: 20px; display: flex; align-items: center; gap: 5px; color: #1976d2; font: 14px 'Liberation Sans', Arial, sans-serif; }
  .adv i { border: 5.500px solid transparent; border-left: 10px solid #1976d2; border-right: 0; margin-left: 1px; }
  .activebox { margin-top: 23px; height: 86px; background: #fff3cd; border: 1px solid #ffeaa7; border-radius: 4px; padding: 13px 12px; }
  .row { display: flex; justify-content: space-between; align-items: center; height: 20px; }
  .row strong { color: #856404; font-size: 13px; font-weight: 600; }
  .row u { color: #dc3545; font: 12px 'Liberation Sans', Arial, sans-serif; text-decoration: underline; }
  .chip { margin-top: 9px; width: 153px; height: 30px; background: #fff; border: 1px solid #dee2e6; border-radius: 4px; font-size: 11.300px; padding: 0 8px 2px; display: flex; align-items: center; justify-content: space-between; white-space: nowrap; }
  .chip em { color: #dc3545; font-style: normal; font-size: 12.500px; }
  .res { margin-top: 4px; }
  .side-body p { font-size: 13.200px; line-height: 20px; margin-top: 10px; color: #6c757d; }

  main { flex: 1; min-width: 0; display: flex; flex-direction: column; }
  header { height: 100px; background: #fff; border-bottom: 1px solid #dee2e6; display: flex; justify-content: space-between; padding: 0 32px 0 0; flex: none; }
  .titles { padding-top: 22px; }
  .h1, .sub, .failed { display: flex; justify-content: flex-end; overflow: hidden; white-space: nowrap; }
  .h1 { width: 57px; font-size: 23.500px; line-height: 36px; font-weight: 700; color: #212529; letter-spacing: -0.7px; }
  .sub { width: 13px; font-size: 13.500px; line-height: 19px; color: #495057; }
  .export { margin-top: 28px; width: 95px; height: 43px; border: 0; border-radius: 4px; background: #2196f3; color: #fff; font: 14px 'Liberation Sans', Arial, sans-serif; display: flex; align-items: center; justify-content: center; gap: 5px; padding: 0 0 0 2px; }
  .failed { width: 51px; height: 26px; line-height: 27px; font-size: 15.400px; color: #343a40; }
  .error { flex: 1; display: flex; flex-direction: column; align-items: center; padding-top: 125px; margin-left: -400px; }
  .error h2 { color: #d32f2f; font-size: 23.300px; line-height: 36px; letter-spacing: -0.33px; }
  .error p { margin-top: 17px; color: #666; font-size: 15.500px; line-height: 24px; letter-spacing: -0.11px; }
  .error button { margin-top: 33px; width: 115px; height: 42px; border: 0; border-radius: 4px; background: #1976d2; color: #fff; font: 16px 'Liberation Sans', Arial, sans-serif; padding: 0; }
  .map { width: 1469px; height: 396px; background: #aad3df; border-radius: 0 8px 0 0; overflow: hidden; position: relative; box-shadow: 0 0 8px rgba(0, 0, 0, 0.1); flex: none; }
  .map path, .map polygon { vector-effect: non-scaling-stroke; fill: none; }
  .map path.land { fill: #f2efe9; }
  .map clipPath path { fill: #000; }
  .map path.water { fill: #aad3df; }
  .map path.river { stroke: #b8dce4; stroke-width: 0.8; }
  .map path.fine { stroke: #c8b0c3; stroke-width: 0.8; }
  .map path.state { stroke: #cbb4c5; stroke-width: 0.9; }
  .map path.country { stroke: #b99bb5; stroke-width: 1.4; }
  .map path.sea, .map path.coast { stroke: #9799bd; stroke-width: 1.1; }
  .map polygon.zone { fill: #4caf50; fill-opacity: 0.5; stroke: #fff; stroke-width: 2; stroke-dasharray: 3; stroke-linecap: round; stroke-linejoin: round; }
  .islet { fill: none; stroke: #92a0c0; }
  .ring { fill: #f2efe9; stroke: #555; stroke-width: 0.9; }
  .map text { font: 11px 'Noto Sans', 'DejaVu Sans', sans-serif; fill: #333; stroke: rgba(255, 255, 255, 0.75); stroke-width: 2.2px; paint-order: stroke; }
  .map text.cn { fill: #794f7e; letter-spacing: 0.35px; }
  .attr { position: absolute; right: 0; bottom: -9px; height: 16px; width: 234px; background: rgba(255, 255, 255, 0.8); font: 11.500px/16px 'Open Sans', sans-serif; letter-spacing: -0.05px; color: #333; white-space: nowrap; padding-left: 5px; }
  .attr a { color: #0078a8; text-decoration: none; }
  .attr i { display: inline-block; width: 12px; height: 8px; background: #4c7be1; margin-right: 4px; }

  .taskbar { height: 40px; flex: none; display: flex; background: linear-gradient(90deg, #e5e4f2 0, #eee 17%, #ededee 62%, #eee0f0 66%, #e5e0ee 72%, #dedfeb 80%, #e2e1ed 100%); color: #111; position: relative; }
  .start { width: 48px; display: flex; align-items: center; justify-content: center; }
  .tsearch { width: 288px; height: 40px; background: #fff; border: 1px solid #c8c8c8; display: flex; align-items: center; padding: 0 9px 0 10px; font-size: 14.500px; color: #333; margin-right: 0; }
  .tsearch span { margin-left: 11px; letter-spacing: -0.7px; }
  .tsearch > svg:last-child { margin-left: auto; }
  .app { width: 49px; display: flex; align-items: center; justify-content: center; position: relative; }
  .running { background: linear-gradient(#3f97f6, #3f97f6) 4px 100% / 41px 2px no-repeat; }
  .current { background: linear-gradient(#3f97f6, #3f97f6) 0 100% / 45px 2px no-repeat, #f9f9f9; color: #fa1e4e; }
  .badge { position: absolute; right: 0; bottom: 4px; width: 28px; height: 17px; border: 1px solid #666; border-radius: 8px; background: #d8d8d8; font-size: 12.500px; line-height: 14px; text-align: center; letter-spacing: -0.3px; }
  .tray { margin-left: auto; display: flex; align-items: center; font-size: 13.500px; }
  .cold { width: 98px; padding-left: 8px; white-space: nowrap; letter-spacing: -0.1px; }
  .sys { display: flex; gap: 8px; align-items: center; padding-left: 14px; width: 112px; }
  .lang { width: 31px; font-size: 12px; letter-spacing: -0.5px; }
  .time { width: 67px; display: flex; flex-direction: column; align-items: center; font-size: 12px; line-height: 18px; letter-spacing: -0.5px; margin-right: 1px; }
  .notes { position: relative; width: 54px; padding-left: 12px; }
  .notes span { position: absolute; left: 20px; top: 7px; width: 16px; height: 16px; border-radius: 50%; background: #d4d4dc; border: 1px solid #777; text-align: center; font: 11px/14px 'Open Sans', sans-serif; }
</style>
